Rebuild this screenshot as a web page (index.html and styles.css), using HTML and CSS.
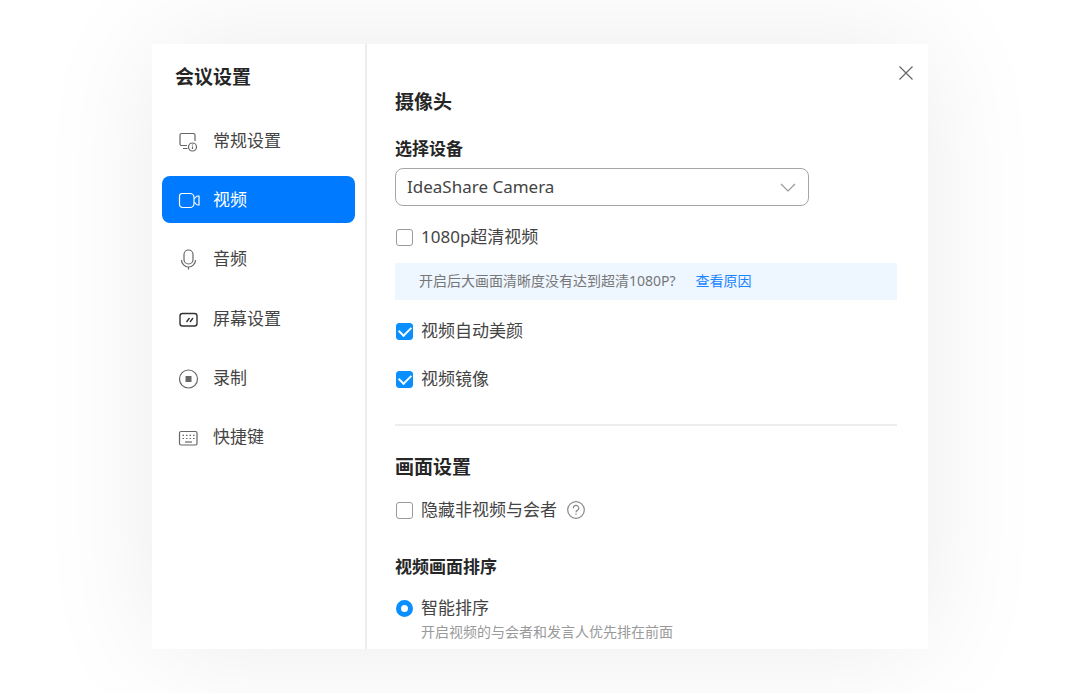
FILE: index.html
```html
<!DOCTYPE html>
<html lang="zh-CN">

<head>
    <meta charset="UTF-8">
    <meta name="viewport" content="width=device-width, initial-scale=1.0">
    <title>会议设置</title>
    <link rel="stylesheet" href="styles.css">
</head>

<body>
    <div class="settings">
        <aside class="sidebar">
            <h1>会议设置</h1>
            <nav class="menu">
                <a href="#general">
                    <svg viewBox="0 0 22 22">
                        <path d="M9 15.500H3.500a1.500 1.500 0 0 1-1.500-1.500V5a1.500 1.500 0 0 1 1.500-1.500h12A1.500 1.500 0 0 1 17 5v6M5 18.500h4.500" />
                        <circle cx="14.500" cy="17" r="4" />
                        <path d="M14.500 16.500v2.500M14.500 14.500v1" />
                    </svg>
                    常规设置
                </a>
                <a href="#video" class="active">
                    <svg viewBox="0 0 22 22">
                        <path d="M4 4.500h8a4 4 0 0 1 4 4v6a4 4 0 0 1-4 4H4.500a3 3 0 0 1-3-3V7A2.500 2.500 0 0 1 4 4.500z" />
                        <path d="M16 9.500c1.500 0 2-2.500 3.500-2.500H21v9h-1.500c-1.500 0-2-2.500-3.500-2.500" />
                    </svg>
                    视频
                </a>
                <a href="#audio">
                    <svg viewBox="0 0 22 22">
                        <rect x="6" y="2" width="9" height="14" rx="4.500" />
                        <path d="M3.500 12a7 7 0 0 0 14 0M10.500 19v2.500" />
                    </svg>
                    音频
                </a>
                <a href="#screen">
                    <svg viewBox="0 0 22 22" class="strong">
                        <rect x="2" y="5.500" width="17" height="12.500" rx="2.500" />
                        <path d="M8.500 14l3-4M12 14l3-4" />
                    </svg>
                    屏幕设置
                </a>
                <a href="#record">
                    <svg viewBox="0 0 22 22">
                        <circle cx="10.500" cy="12" r="9" />
                        <rect x="7.500" y="9" width="6" height="6" class="fill" />
                    </svg>
                    录制
                </a>
                <a href="#shortcuts">
                    <svg viewBox="0 0 22 22">
                        <rect x="1.500" y="5.500" width="17.500" height="13.500" rx="1.500" />
                        <path d="M4.500 9.300h12M4.500 12.500h12" stroke-dasharray="1.500 2" />
                        <path d="M7 16h7" />
                    </svg>
                    快捷键
                </a>
            </nav>
        </aside>

        <main class="content">
            <button type="button" class="close" aria-label="关闭">
                <svg viewBox="0 0 14 14">
                    <path d="M.5.5l13 13M13.500.5l-13 13" />
                </svg>
            </button>

            <form>
                <section class="camera">
                    <h2>摄像头</h2>
                    <label class="field-title" for="device">选择设备</label>
                    <div class="select-box">
                        <select id="device">
                            <option>IdeaShare Camera</option>
                        </select>
                        <svg viewBox="0 0 16 9">
                            <path d="M1 1l7 7 7-7" />
                        </svg>
                    </div>
                    <label class="option"><input type="checkbox">1080p超清视频</label>
                    <p class="notice">开启后大画面清晰度没有达到超清1080P?<a href="#reason">查看原因</a></p>
                    <label class="option"><input type="checkbox" checked>视频自动美颜</label>
                    <label class="option mirror"><input type="checkbox" checked>视频镜像</label>
                </section>

                <section class="layout">
                    <h2>画面设置</h2>
                    <div class="row">
                        <label class="option"><input type="checkbox">隐藏非视频与会者</label>
                        <button type="button" class="help" aria-label="帮助">
                            <svg viewBox="0 0 18 18">
                                <circle cx="9" cy="9" r="8.300" />
                                <path d="M6.300 7.200a2.700 2.700 0 1 1 4 2.200c-.9.500-1.300 1-1.300 2M9 12.700V14" />
                            </svg>
                        </button>
                    </div>
                    <h3>视频画面排序</h3>
                    <label class="option"><input type="radio" name="order" checked>智能排序</label>
                    <p class="hint">开启视频的与会者和发言人优先排在前面</p>
                </section>
            </form>
        </main>
    </div>
</body>

</html>
```

FILE: styles.css
```css
* {
    box-sizing: border-box;
}

body {
    font-family: "Noto Sans", "Noto Sans CJK SC", sans-serif;
    font-size: 17px;
    line-height: 24px;
    margin: 0;
    padding: 44px 24px;
    background-color: #fff;
    color: #444;
}

h1,
h2,
h3,
p {
    margin: 0;
}

h1,
h2 {
    font-size: 19px;
    line-height: 28px;
    color: #262626;
}

h3,
.field-title {
    display: block;
    font-size: 17px;
    font-weight: bold;
    line-height: 24px;
    color: #262626;
}

svg {
    display: block;
    fill: none;
    stroke: currentColor;
    stroke-width: 1.2;
}

.settings {
    display: flex;
    max-width: 776px;
    margin: 0 auto;
    background: #fff;
    box-shadow: 0 0 110px rgba(0, 0, 0, 0.08);
}

/* Sidebar */
.sidebar {
    flex: 0 0 215px;
    padding: 19px 10px;
    border-right: 2px solid #ededed;
}

.sidebar h1 {
    padding-left: 13px;
}

.menu {
    display: flex;
    flex-direction: column;
    justify-content: space-between;
    height: 344px;
    margin-top: 26px;
}

.menu a {
    display: flex;
    align-items: center;
    gap: 13px;
    height: 47px;
    padding: 0 16px;
    border-radius: 8px;
    color: #444;
    text-decoration: none;
}

.menu svg {
    width: 22px;
    height: 22px;
    color: #666;
}

.menu .strong {
    color: #333;
    stroke-width: 1.4;
}

.menu .fill {
    fill: currentColor;
    stroke: none;
}

.menu a.active,
.menu .active svg {
    background: #007aff;
    color: #fff;
}

/* Right panel */
.content {
    position: relative;
    flex: 1;
    min-width: 0;
    padding: 44px 31px 7px 28px;
}

button {
    padding: 0;
    border: none;
    background: none;
    cursor: pointer;
}

.close {
    position: absolute;
    top: 22px;
    right: 15px;
    color: #666;
}

.close svg {
    width: 14px;
    height: 14px;
}

.camera {
    padding-bottom: 33px;
    border-bottom: 2px solid #ededed;
}

.field-title {
    margin-top: 21px;
}

.select-box {
    position: relative;
    max-width: 414px;
    margin: 7px 0 19px;
}

.select-box select {
    display: block;
    width: 100%;
    height: 38px;
    padding: 0 40px 2px 11px;
    border: 1px solid #a6a6a6;
    border-radius: 8px;
    background: #fff;
    color: #444;
    font-family: inherit;
    font-size: 17px;
    appearance: none;
}

.select-box svg {
    position: absolute;
    top: 15px;
    right: 13px;
    width: 16px;
    height: 9px;
    color: #999;
    pointer-events: none;
}

.option {
    display: flex;
    align-items: center;
    gap: 8px;
}

.option input {
    display: grid;
    place-items: center;
    flex: none;
    width: 17px;
    height: 17px;
    margin: 0 0 0 1px;
    border: 1px solid #999;
    border-radius: 3px;
    background: #fff;
    appearance: none;
}

.option input:checked {
    border-color: #0a8fff;
    background: #0a8fff;
}

.option input[type="checkbox"]:checked::before {
    content: "";
    width: 10px;
    height: 6px;
    margin-bottom: 3px;
    border-left: 2px solid #fff;
    border-bottom: 2px solid #fff;
    transform: rotate(-45deg);
}

.option input[type="radio"] {
    border-radius: 50%;
}

.option input[type="radio"]:checked {
    border-width: 5px;
    background: #fff;
}

.notice {
    margin: 14px 0 19px;
    padding: 6px 24px 7px;
    background: #eef6ff;
    color: #777;
    font-size: 14px;
}

.notice a {
    margin-left: 20px;
    color: #1a85ff;
    text-decoration: none;
}

.mirror {
    margin-top: 24px;
}

.layout {
    padding-top: 27px;
}

.row {
    display: flex;
    align-items: center;
    gap: 10px;
    margin: 17px 0 33px;
}

.help {
    color: #888;
}

.help svg {
    width: 18px;
    height: 18px;
}

.layout h3 {
    margin-bottom: 17px;
}

.hint {
    margin-top: 2px;
    padding-left: 26px;
    color: #999;
    font-size: 14px;
    line-height: 20px;
}
```
